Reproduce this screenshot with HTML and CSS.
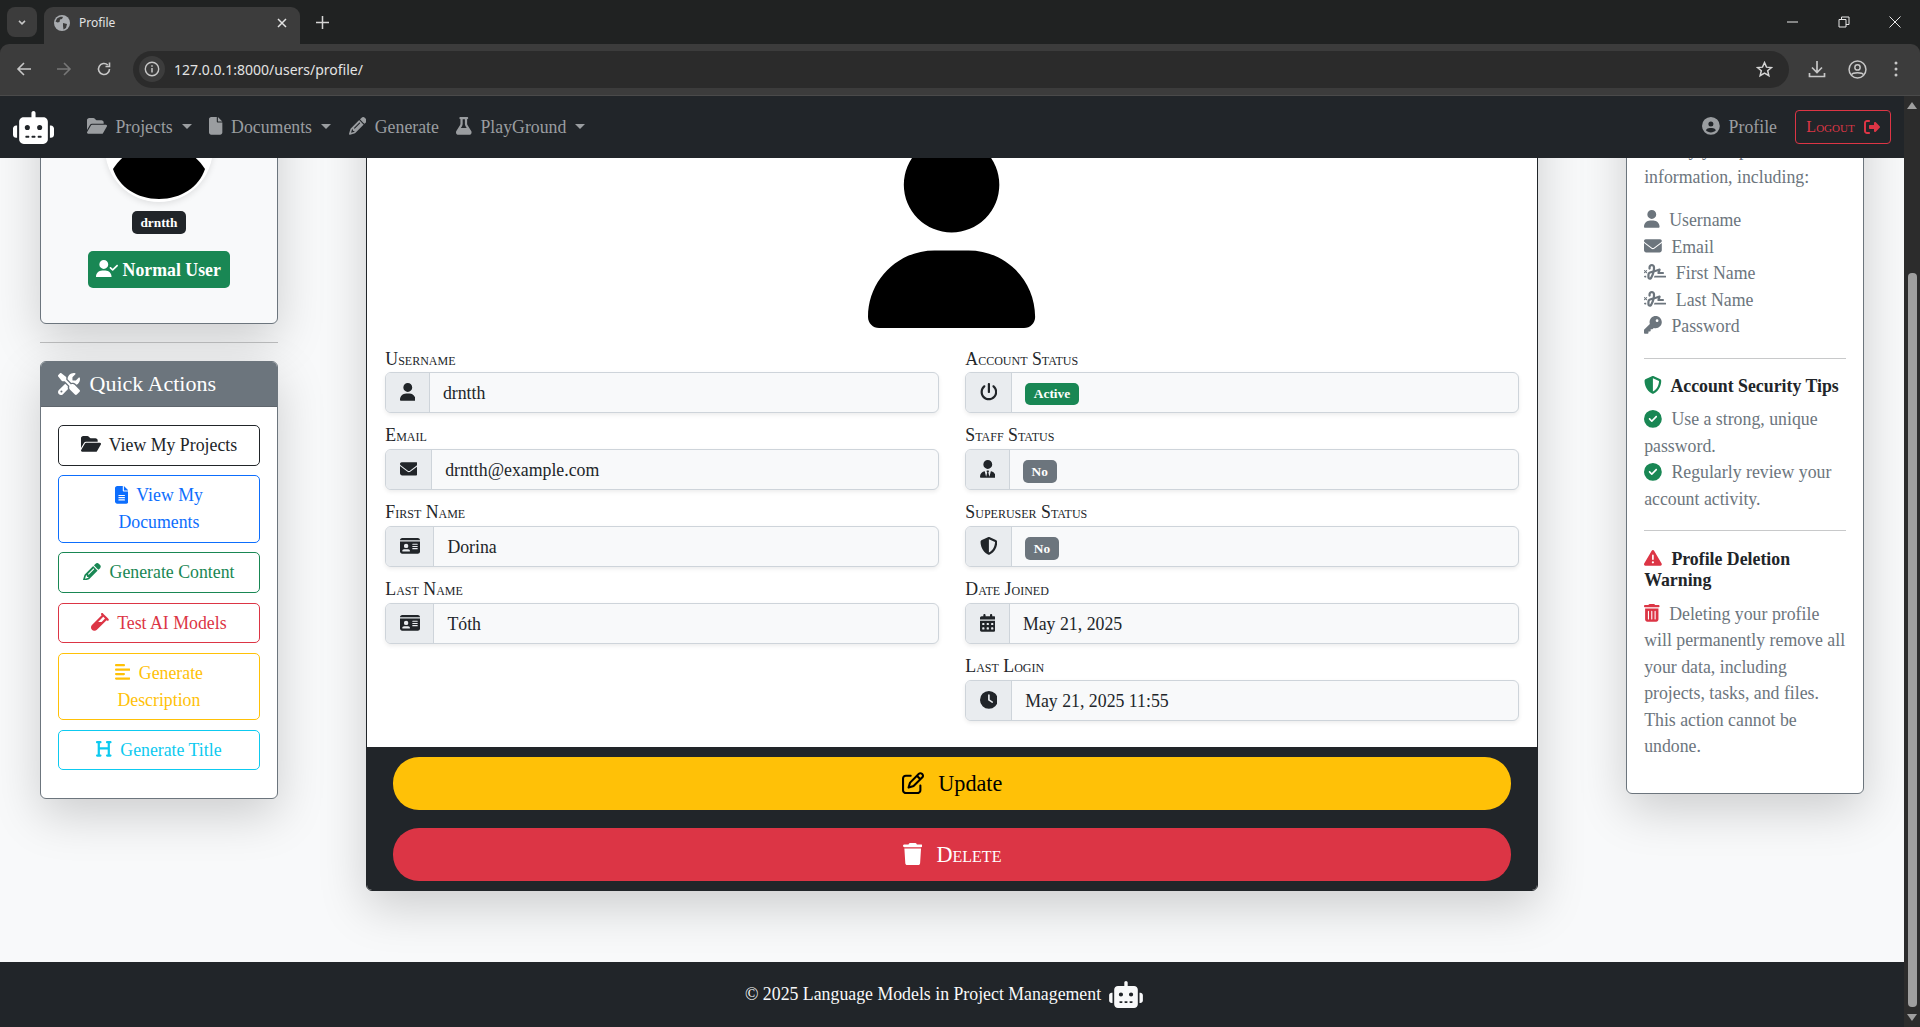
FILE: index.html
```html
<!DOCTYPE html>
<html lang="en">
<head>
    <meta charset="UTF-8">
    <meta name="viewport" content="width=device-width, initial-scale=1.0">
    <title>Profile</title>
    <link rel="stylesheet" href="styles.css">
</head>
<body>
    <svg class="sprite" aria-hidden="true">
        <defs>
            <path id="i-user" d="M224 256A128 128 0 1 0 224 0a128 128 0 1 0 0 256zm-45.7 48C79.8 304 0 383.8 0 482.3C0 498.7 13.3 512 29.7 512H418.3c16.4 0 29.7-13.3 29.7-29.7C448 383.8 368.2 304 269.7 304H178.3z"/>
            <path id="i-envelope" d="M48 64C21.5 64 0 85.5 0 112c0 15.1 7.1 29.3 19.2 38.4L236.8 313.6c11.4 8.5 27 8.5 38.4 0L492.8 150.4c12.1-9.1 19.2-23.3 19.2-38.4c0-26.5-21.5-48-48-48H48zM0 176V384c0 35.3 28.7 64 64 64H448c35.3 0 64-28.7 64-64V176L294.4 339.2c-22.8 17.1-54 17.1-76.8 0L0 176z"/>
            <path id="i-folder" d="M88.7 223.8L0 375.8V96C0 60.7 28.7 32 64 32H181.5c17 0 33.3 6.7 45.3 18.7l26.5 26.5c12 12 28.3 18.7 45.3 18.7H416c35.3 0 64 28.7 64 64v32H144c-22.8 0-43.8 12.1-55.3 31.8zm27.6 16.1C122.1 230 132.6 224 144 224H544c11.5 0 22 6.1 27.7 16.1s5.7 22.2-.1 32.1l-112 192C453.9 474 443.4 480 432 480H32c-11.5 0-22-6.1-27.7-16.1s-5.7-22.2 .1-32.1l112-192z"/>
            <path id="i-file" d="M0 64C0 28.7 28.7 0 64 0H224V128c0 17.7 14.3 32 32 32H384V448c0 35.3-28.7 64-64 64H64c-35.3 0-64-28.7-64-64V64zm384 64H256V0L384 128z"/>
            <path id="i-file-lines" d="M64 0C28.7 0 0 28.7 0 64V448c0 35.3 28.7 64 64 64H320c35.3 0 64-28.7 64-64V160H256c-17.7 0-32-14.3-32-32V0H64zM256 0V128H384L256 0zM112 256H272c8.8 0 16 7.2 16 16s-7.2 16-16 16H112c-8.8 0-16-7.2-16-16s7.2-16 16-16zm0 64H272c8.8 0 16 7.2 16 16s-7.2 16-16 16H112c-8.8 0-16-7.2-16-16s7.2-16 16-16zm0 64H272c8.8 0 16 7.2 16 16s-7.2 16-16 16H112c-8.8 0-16-7.2-16-16s7.2-16 16-16z"/>
            <path id="i-pencil" d="M410.3 231l11.3-11.3-33.9-33.9-62.1-62.1L291.7 89.8l-11.3 11.3-22.6 22.6L58.6 322.9c-10.4 10.4-18 23.3-22.2 37.4L1 480.7c-2.5 8.4-.2 17.5 6.1 23.7s15.3 8.5 23.7 6.1l120.3-35.4c14.1-4.2 27-11.8 37.4-22.2L387.7 253.7 410.3 231zM160 399.4l-9.1 22.7c-4 3.1-8.5 5.4-13.3 6.9L59.4 452l23-78.1c1.4-4.9 3.8-9.4 6.9-13.3l22.7-9.1v32c0 8.8 7.2 16 16 16h32zM362.7 18.7L348.3 33.2 325.7 55.8 314.3 67.1l33.9 33.9 62.1 62.1 33.9 33.9 11.3-11.3 22.6-22.6 14.5-14.5c25-25 25-65.5 0-90.5L453.3 18.7c-25-25-65.5-25-90.5 0zm-47.4 168l-144 144c-6.2 6.2-16.4 6.2-22.6 0s-6.2-16.4 0-22.6l144-144c6.2-6.2 16.4-6.2 22.6 0s6.2 16.4 0 22.6z"/>
            <path id="i-flask" d="M288 0H160 128C110.3 0 96 14.3 96 32s14.3 32 32 32V196.8c0 11.8-3.3 23.5-9.5 33.5L10.3 406.2C3.6 417.2 0 429.7 0 442.6C0 480.9 31.1 512 69.4 512H378.6c38.3 0 69.4-31.1 69.4-69.4c0-12.8-3.6-25.4-10.3-36.4L329.5 230.4c-6.2-10.1-9.5-21.7-9.5-33.5V64c17.7 0 32-14.3 32-32s-14.3-32-32-32H288zM192 196.8V64h64V196.8c0 23.7 6.6 46.9 19 67.1L309.5 320h-171L173 263.9c12.4-20.2 19-43.4 19-67.1z"/>
            <path id="i-circle-user" d="M399 384.2C376.9 345.8 335.4 320 288 320H224c-47.4 0-88.9 25.8-111 64.2c35.2 39.2 86.2 63.8 143 63.8s107.8-24.7 143-63.8zM0 256a256 256 0 1 1 512 0A256 256 0 1 1 0 256zm256 16a72 72 0 1 0 0-144 72 72 0 1 0 0 144z"/>
            <path id="i-logout" d="M377.9 105.9L500.7 228.7c7.2 7.2 11.3 17.1 11.3 27.3s-4.1 20.1-11.3 27.3L377.9 406.1c-6.4 6.4-15 9.9-24 9.9c-18.7 0-33.9-15.2-33.9-33.9l0-62.1-128 0c-17.7 0-32-14.3-32-32l0-64c0-17.7 14.3-32 32-32l128 0 0-62.1c0-18.7 15.2-33.9 33.9-33.9c9 0 17.6 3.6 24 9.9zM160 96L96 96c-17.7 0-32 14.3-32 32l0 256c0 17.7 14.3 32 32 32l64 0c17.7 0 32 14.3 32 32s-14.3 32-32 32l-64 0c-53 0-96-43-96-96L0 128C0 75 43 32 96 32l64 0c17.7 0 32 14.3 32 32s-14.3 32-32 32z"/>
            <path id="i-user-check" d="M96 128a128 128 0 1 1 256 0A128 128 0 1 1 96 128zM0 482.3C0 383.8 79.8 304 178.3 304h91.4C368.2 304 448 383.8 448 482.3c0 16.4-13.3 29.7-29.7 29.7H29.7C13.3 512 0 498.7 0 482.3zM625 177L497 305c-9.4 9.4-24.6 9.4-33.9 0l-64-64c-9.4-9.4-9.4-24.6 0-33.9s24.6-9.4 33.9 0l47 47L591 143c9.4-9.4 24.6-9.4 33.9 0s9.4 24.6 0 33.9z"/>
            <path id="i-tools" d="M78.6 5C69.1-2.4 55.6-1.5 47 7L7 47c-8.5 8.5-9.4 22-2.1 31.6l80 104c4.5 5.9 11.6 9.4 19 9.4h54.1l109 109c-14.7 29-10 65.4 14.3 89.6l112 112c12.5 12.5 32.8 12.5 45.3 0l64-64c12.5-12.5 12.5-32.8 0-45.3l-112-112c-24.2-24.2-60.6-29-89.6-14.3l-109-109V104c0-7.5-3.5-14.5-9.4-19L78.6 5zM19.9 396.1C7.2 408.8 0 426.1 0 444.1C0 481.6 30.4 512 67.9 512c18 0 35.3-7.2 48-19.9L233.7 374.3c-7.8-20.9-9-43.6-3.6-65.1l-61.7-61.7L19.9 396.1zM512 144c0-10.5-1.1-20.7-3.2-30.5c-2.4-11.2-16.1-14.1-24.2-6l-63.9 63.9c-3 3-7.1 4.7-11.3 4.7H352c-8.8 0-16-7.2-16-16V102.6c0-4.2 1.7-8.3 4.7-11.3l63.9-63.9c8.1-8.1 5.2-21.8-6-24.2C388.7 1.1 378.5 0 368 0C288.5 0 224 64.5 224 144l0 .8 85.3 85.3c36-9.1 75.8 .5 104 28.7L429 274.5c49-23 83-72.8 83-130.5zM56 432a24 24 0 1 1 48 0 24 24 0 1 1 -48 0z"/>
            <path id="i-vial" d="M342.6 9.4c-12.5-12.5-32.8-12.5-45.3 0s-12.5 32.8 0 45.3l9.4 9.4L28.1 342.6C10.1 360.6 0 385 0 410.5V416c0 53 43 96 96 96h5.5c25.5 0 49.9-10.1 67.9-28.1L448 205.3l9.4 9.4c12.5 12.5 32.8 12.5 45.3 0s12.5-32.8 0-45.3l-16-16-128-128-16-16zM205.3 256L352 109.3 402.7 160l-96 96H205.3z"/>
            <path id="i-align-left" d="M288 64c0 17.7-14.3 32-32 32H32C14.3 96 0 81.7 0 64S14.3 32 32 32H256c17.7 0 32 14.3 32 32zm0 256c0 17.7-14.3 32-32 32H32c-17.7 0-32-14.3-32-32s14.3-32 32-32H256c17.7 0 32 14.3 32 32zM0 192c0-17.7 14.3-32 32-32H416c17.7 0 32 14.3 32 32s-14.3 32-32 32H32c-17.7 0-32-14.3-32-32zM448 448c0 17.7-14.3 32-32 32H32c-17.7 0-32-14.3-32-32s14.3-32 32-32H416c17.7 0 32 14.3 32 32z"/>
            <path id="i-heading" d="M0 64C0 46.3 14.3 32 32 32H80h48c17.7 0 32 14.3 32 32s-14.3 32-32 32H112V208H336V96H320c-17.7 0-32-14.3-32-32s14.3-32 32-32h48 48c17.7 0 32 14.3 32 32s-14.3 32-32 32H400V240 416h16c17.7 0 32 14.3 32 32s-14.3 32-32 32H368 320c-17.7 0-32-14.3-32-32s14.3-32 32-32h16V272H112V416h16c17.7 0 32 14.3 32 32s-14.3 32-32 32H80 32c-17.7 0-32-14.3-32-32s14.3-32 32-32H48V240 96H32C14.3 96 0 81.7 0 64z"/>
            <g id="i-signature">
                <path d="M192 128c0-17.7 14.3-32 32-32s32 14.3 32 32v7.8c0 27.7-2.4 55.3-7.1 82.5l-84.4 25.3c-40.6 12.2-68.4 49.6-68.4 92v71.9c0 40 32.5 72.5 72.5 72.5c26 0 50-13.9 62.9-36.5l13.9-24.3c26.8-47 46.5-97.7 58.4-150.5l94.4-28.3-12.5 37.5c-3.3 9.8-1.6 20.5 4.4 28.8s15.7 13.3 26 13.3H544c17.7 0 32-14.3 32-32s-14.3-32-32-32H460.4l18-53.9c3.8-11.3 .9-23.8-7.4-32.4s-20.7-11.8-32.2-8.4L316.4 198.1c2.4-20.2 3.6-40.5 3.6-60.9V128c0-53-43-96-96-96s-96 43-96 96v32c0 17.7 14.3 32 32 32s32-14.3 32-32V128zm-9.2 177l49-14.7c-10.4 33.8-24.5 66.4-42.1 97.2l-13.9 24.3c-1.5 2.6-4.3 4.3-7.4 4.3c-4.7 0-8.5-3.8-8.5-8.5V335.6c0-14.1 9.3-26.6 22.8-30.7zM24 368c-13.3 0-24 10.7-24 24s10.7 24 24 24H64.3c-.2-2.8-.3-5.6-.3-8.5V368H24zm592 48c13.3 0 24-10.7 24-24s-10.7-24-24-24H305.9c-6.7 16.3-14.2 32.3-22.3 48H616z"/>
                <path d="M12 216l64 64M76 216l-64 64" fill="none" stroke="currentColor" stroke-width="30" stroke-linecap="round"/>
            </g>
            <path id="i-key" d="M336 352c97.2 0 176-78.8 176-176S433.2 0 336 0S160 78.8 160 176c0 18.7 2.9 36.8 8.3 53.7L7 391c-4.5 4.5-7 10.6-7 17v80c0 13.3 10.7 24 24 24h80c13.3 0 24-10.7 24-24V448h40c13.3 0 24-10.7 24-24V384h40c6.4 0 12.5-2.5 17-7l33.3-33.3c16.9 5.4 35 8.3 53.7 8.3zM376 96a40 40 0 1 1 0 80 40 40 0 1 1 0-80z"/>
            <path id="i-shield" d="M256 0c4.6 0 9.2 1 13.4 2.9L457.7 82.8c22 9.3 38.4 31 38.3 57.2c-.5 99.2-41.3 280.7-213.6 363.2c-16.7 8-36.1 8-52.8 0C57.3 420.7 16.5 239.2 16 140c-.1-26.2 16.3-47.9 38.3-57.2L242.7 2.9C246.8 1 251.4 0 256 0zm0 66.8V444.8C394 378 431.1 230.1 432 141.4L256 66.8l0 0z"/>
            <path id="i-check" d="M256 512A256 256 0 1 0 256 0a256 256 0 1 0 0 512zM369 209L241 337c-9.4 9.4-24.6 9.4-33.9 0l-64-64c-9.4-9.4-9.4-24.6 0-33.9s24.6-9.4 33.9 0l47 47L335 175c9.4-9.4 24.6-9.4 33.9 0s9.4 24.6 0 33.9z"/>
            <path id="i-warning" d="M256 32c14.2 0 27.3 7.5 34.5 19.8l216 368c7.3 12.4 7.3 27.7 .2 40.1S486.3 480 472 480H40c-14.3 0-27.6-7.7-34.7-20.1s-7-27.8 .2-40.1l216-368C228.7 39.5 241.8 32 256 32zm0 128c-13.3 0-24 10.7-24 24V296c0 13.3 10.7 24 24 24s24-10.7 24-24V184c0-13.3-10.7-24-24-24zm32 224a32 32 0 1 0 -64 0 32 32 0 1 0 64 0z"/>
            <path id="i-trash-can" d="M135.2 17.7C140.6 6.8 151.7 0 163.8 0H284.2c12.1 0 23.2 6.8 28.6 17.7L320 32h96c17.7 0 32 14.3 32 32s-14.3 32-32 32H32C14.3 96 0 81.7 0 64S14.3 32 32 32h96l7.2-14.3zM32 128H416V448c0 35.3-28.7 64-64 64H96c-35.3 0-64-28.7-64-64V128zm96 64c-8.8 0-16 7.2-16 16V432c0 8.8 7.2 16 16 16s16-7.2 16-16V208c0-8.8-7.2-16-16-16zm96 0c-8.8 0-16 7.2-16 16V432c0 8.8 7.2 16 16 16s16-7.2 16-16V208c0-8.8-7.2-16-16-16zm96 0c-8.8 0-16 7.2-16 16V432c0 8.8 7.2 16 16 16s16-7.2 16-16V208c0-8.8-7.2-16-16-16z"/>
            <path id="i-trash" d="M135.2 17.7L128 32H32C14.3 32 0 46.3 0 64S14.3 96 32 96H416c17.7 0 32-14.3 32-32s-14.3-32-32-32H320l-7.2-14.3C307.4 6.8 296.3 0 284.2 0H163.8c-12.1 0-23.2 6.8-28.6 17.7zM416 128H32L53.2 467c1.6 25.3 22.6 45 47.9 45H346.9c25.3 0 46.3-19.7 47.9-45L416 128z"/>
            <path id="i-edit" d="M441 58.9L453.1 71c9.4 9.4 9.4 24.6 0 33.9L424 134.1 377.9 88 407 58.9c9.4-9.4 24.6-9.4 33.9 0zM209.8 256.2L344 121.9 390.1 168 255.8 302.2c-2.9 2.9-6.5 5-10.4 6.1l-58.5 16.7 16.7-58.5c1.1-3.9 3.2-7.5 6.1-10.4zM373.1 25L175.8 222.2c-8.7 8.7-15 19.4-18.3 31.1l-28.6 100c-2.4 8.4-.1 17.4 6.1 23.6s15.2 8.5 23.6 6.1l100-28.6c11.8-3.4 22.5-9.7 31.1-18.3L487 138.9c28.1-28.1 28.1-73.7 0-101.8L474.9 25C446.8-3.1 401.2-3.1 373.1 25zM88 64C39.4 64 0 103.4 0 152V424c0 48.6 39.4 88 88 88H360c48.6 0 88-39.4 88-88V312c0-13.3-10.7-24-24-24s-24 10.7-24 24V424c0 22.1-17.9 40-40 40H88c-22.1 0-40-17.9-40-40V152c0-22.1 17.9-40 40-40H200c13.3 0 24-10.7 24-24s-10.7-24-24-24H88z"/>
            <path id="i-id-card" d="M0 96l576 0c0-35.3-28.7-64-64-64H64C28.7 32 0 60.7 0 96zm0 32V416c0 35.3 28.7 64 64 64H512c35.3 0 64-28.7 64-64V128H0zM64 405.3c0-29.5 23.9-53.3 53.3-53.3H234.7c29.5 0 53.3 23.9 53.3 53.3c0 5.9-4.8 10.7-10.7 10.7H74.7c-5.9 0-10.7-4.8-10.7-10.7zM176 192a64 64 0 1 1 0 128 64 64 0 1 1 0-128zm176 16c0-8.8 7.2-16 16-16H496c8.8 0 16 7.2 16 16s-7.2 16-16 16H368c-8.8 0-16-7.2-16-16zm0 64c0-8.8 7.2-16 16-16H496c8.8 0 16 7.2 16 16s-7.2 16-16 16H368c-8.8 0-16-7.2-16-16zm0 64c0-8.8 7.2-16 16-16H496c8.8 0 16 7.2 16 16s-7.2 16-16 16H368c-8.8 0-16-7.2-16-16z"/>
            <path id="i-power" d="M288 32c0-17.7-14.3-32-32-32s-32 14.3-32 32V256c0 17.7 14.3 32 32 32s32-14.3 32-32V32zM143.5 120.6c13.6-11.3 15.4-31.5 4.1-45.1s-31.5-15.4-45.1-4.1C49.7 115.4 16 181.8 16 256c0 132.5 107.5 240 240 240s240-107.5 240-240c0-74.2-33.8-140.6-86.6-184.6c-13.6-11.3-33.8-9.4-45.1 4.1s-9.4 33.8 4.1 45.1c38.9 32.3 63.5 81 63.5 135.4c0 97.2-78.8 176-176 176s-176-78.8-176-176c0-54.4 24.7-103.1 63.5-135.4z"/>
            <path id="i-user-tie" d="M96 128a128 128 0 1 0 256 0A128 128 0 1 0 96 128zm94.5 200.2l18.6 31L175.8 483.1l-36-146.9c-2-8.1-9.8-13.4-17.9-11.3C51.9 342.4 0 405.8 0 481.3c0 17 13.8 30.7 30.7 30.7H162.5c0 0 0 0 .1 0H168 280h5.5c0 0 0 0 .1 0H417.3c17 0 30.7-13.8 30.7-30.7c0-75.5-51.9-138.9-121.9-156.4c-8.1-2-15.9 3.3-17.9 11.3l-36 146.9L238.9 359.2l18.6-31c6.4-10.7-1.3-24.2-13.7-24.2H224 204.3c-12.4 0-20.1 13.6-13.7 24.2z"/>
            <path id="i-calendar" d="M128 0c17.7 0 32 14.3 32 32V64H288V32c0-17.7 14.3-32 32-32s32 14.3 32 32V64h48c26.5 0 48 21.5 48 48v48H0V112C0 85.5 21.5 64 48 64H96V32c0-17.7 14.3-32 32-32zM0 192H448V464c0 26.5-21.5 48-48 48H48c-26.5 0-48-21.5-48-48V192zm64 80v32c0 8.8 7.2 16 16 16h32c8.8 0 16-7.2 16-16V272c0-8.8-7.2-16-16-16H80c-8.8 0-16 7.2-16 16zm128 0v32c0 8.8 7.2 16 16 16h32c8.8 0 16-7.2 16-16V272c0-8.8-7.2-16-16-16H208c-8.8 0-16 7.2-16 16zm144-16c-8.8 0-16 7.2-16 16v32c0 8.8 7.2 16 16 16h32c8.8 0 16-7.2 16-16V272c0-8.8-7.2-16-16-16H336zM64 400v32c0 8.8 7.2 16 16 16h32c8.8 0 16-7.2 16-16V400c0-8.8-7.2-16-16-16H80c-8.8 0-16 7.2-16 16zm144-16c-8.8 0-16 7.2-16 16v32c0 8.8 7.2 16 16 16h32c8.8 0 16-7.2 16-16V400c0-8.8-7.2-16-16-16H208zm112 16v32c0 8.8 7.2 16 16 16h32c8.8 0 16-7.2 16-16V400c0-8.8-7.2-16-16-16H336c-8.8 0-16 7.2-16 16z"/>
            <path id="i-clock" d="M256 0a256 256 0 1 1 0 512A256 256 0 1 1 256 0zM232 120V256c0 8 4 15.5 10.7 20l96 64c11 7.4 25.9 4.4 33.3-6.7s4.4-25.9-6.7-33.3L280 243.2V120c0-13.3-10.7-24-24-24s-24 10.7-24 24z"/>
            <path id="i-robot" d="M320 0c17.7 0 32 14.3 32 32V96H472c39.8 0 72 32.2 72 72V440c0 39.8-32.2 72-72 72H168c-39.8 0-72-32.2-72-72V168c0-39.8 32.2-72 72-72H288V32c0-17.7 14.3-32 32-32zM208 384c-8.8 0-16 7.2-16 16s7.2 16 16 16h32c8.8 0 16-7.2 16-16s-7.2-16-16-16H208zm96 0c-8.8 0-16 7.2-16 16s7.2 16 16 16h32c8.8 0 16-7.2 16-16s-7.2-16-16-16H304zm96 0c-8.8 0-16 7.2-16 16s7.2 16 16 16h32c8.8 0 16-7.2 16-16s-7.2-16-16-16H400zM264 256a40 40 0 1 0 -80 0 40 40 0 1 0 80 0zm152 40a40 40 0 1 0 0-80 40 40 0 1 0 0 80zM48 224H64V416H48c-26.5 0-48-21.5-48-48V272c0-26.5 21.5-48 48-48zm544 0c26.5 0 48 21.5 48 48v96c0 26.5-21.5 48-48 48H576V224h16z"/>
        </defs>
    </svg>

    <div class="browser">
        <div class="tabstrip">
            <div class="tab-search">
                <svg class="cicon" viewBox="0 0 16 16"><path d="M4 6.5l4 4 4-4" fill="none" stroke="currentColor" stroke-width="2"/></svg>
            </div>
            <div class="tab">
                <svg class="favicon" viewBox="0 0 16 16"><circle cx="8" cy="8" r="8" fill="#a9acb0"/><path d="M3 3.500c2-1.500 4-2 6-1.500L8 4 6 4.500 5.500 7 3.500 7.500 1.500 6.500zM9 8l4 1-1 4-2.500 1.500L9 11z" fill="#3c3c3c"/></svg>
                <span class="tab-title">Profile</span>
                <svg class="tab-close" viewBox="0 0 10 10"><path d="M1 1l8 8M9 1l-8 8" fill="none" stroke="currentColor" stroke-width="1.500"/></svg>
            </div>
            <svg class="new-tab" viewBox="0 0 12 12"><path d="M6 0v12M0 6h12" fill="none" stroke="currentColor" stroke-width="1.400"/></svg>
            <div class="window-controls">
                <svg viewBox="0 0 12 12"><path d="M0 6h11" fill="none" stroke="currentColor"/></svg>
                <svg viewBox="0 0 12 12"><path d="M1 3.500h7v7.500H1zM3.500 3.500V1H11v7.500H8" fill="none" stroke="currentColor"/></svg>
                <svg viewBox="0 0 12 12"><path d="M.5.500l11 11M11.500.500l-11 11" fill="none" stroke="currentColor"/></svg>
            </div>
        </div>
        <div class="toolbar">
            <svg class="tool" viewBox="0 0 16 16"><path d="M15 8H2M8 2L2 8l6 6" fill="none" stroke="currentColor" stroke-width="1.600"/></svg>
            <svg class="tool tool-off" viewBox="0 0 16 16"><path d="M1 8h13M8 2l6 6-6 6" fill="none" stroke="currentColor" stroke-width="1.600"/></svg>
            <svg class="tool" viewBox="0 0 16 16"><path d="M13.500 8A5.500 5.500 0 1 1 11.800 4M13.500 1.500V5.500H9.500" fill="none" stroke="currentColor" stroke-width="1.600"/></svg>
            <div class="urlbar">
                <span class="url-chip">
                    <svg viewBox="0 0 16 16"><circle cx="8" cy="8" r="6.700" fill="none" stroke="currentColor" stroke-width="1.400"/><path d="M8 7v4.500M8 4.300v1.500" stroke="currentColor" stroke-width="1.500"/></svg>
                </span>
                <span class="url-text">127.0.0.1:8000/users/profile/</span>
                <svg class="star" viewBox="0 0 16 16"><path d="M8 1.500l1.900 4.300 4.600.4-3.500 3 1.100 4.600L8 11.400l-4.100 2.400L5 9.200l-3.500-3 4.600-.4z" fill="none" stroke="currentColor" stroke-width="1.400"/></svg>
            </div>
            <svg class="tool tool-dl" viewBox="0 0 18 18"><path d="M9 1v11M4 7.500L9 12.500l5-5M1.500 13v3.500h15V13" fill="none" stroke="currentColor" stroke-width="1.700"/></svg>
            <svg class="tool tool-me" viewBox="0 0 18 18"><circle cx="9" cy="9" r="8" fill="none" stroke="currentColor" stroke-width="1.400"/><circle cx="9" cy="7" r="2.500" fill="none" stroke="currentColor" stroke-width="1.400"/><path d="M3.500 14c1-2.500 10-2.500 11 0" fill="none" stroke="currentColor" stroke-width="1.400"/></svg>
            <svg class="tool tool-menu" viewBox="0 0 4 16"><circle cx="2" cy="2" r="1.500" fill="currentColor"/><circle cx="2" cy="8" r="1.500" fill="currentColor"/><circle cx="2" cy="14" r="1.500" fill="currentColor"/></svg>
        </div>
    </div>

    <div class="viewport">
        <div class="page">
            <nav class="navbar">
                <svg class="logo" viewBox="0 0 640 512"><use href="#i-robot"/></svg>
                <ul class="nav-links">
                    <li><svg class="icon" viewBox="0 0 576 512"><use href="#i-folder"/></svg> Projects<span class="caret"></span></li>
                    <li><svg class="icon" viewBox="0 0 384 512"><use href="#i-file"/></svg> Documents<span class="caret"></span></li>
                    <li><svg class="icon" viewBox="0 0 512 512"><use href="#i-pencil"/></svg> Generate</li>
                    <li><svg class="icon" viewBox="0 0 448 512"><use href="#i-flask"/></svg> PlayGround<span class="caret"></span></li>
                </ul>
                <div class="nav-right">
                    <span class="nav-profile"><svg class="icon" viewBox="0 0 512 512"><use href="#i-circle-user"/></svg> Profile</span>
                    <a class="btn-logout">Logout <svg class="icon" viewBox="0 0 512 512"><use href="#i-logout"/></svg></a>
                </div>
            </nav>

            <div class="scroller">
                <main class="profile-row">
                    <aside class="side-left">
                        <section class="card user-card">
                            <svg class="avatar" viewBox="0 0 108 108">
                                <circle cx="54" cy="54" r="54" fill="#fff"/>
                                <path d="M54 50c-18 0-35 8-46 25c6 18 24 30 46 30s40-12 46-30c-11-17-28-25-46-25z"/>
                            </svg>
                            <span class="badge badge-dark">drntth</span>
                            <span class="badge badge-role"><svg class="icon" viewBox="0 0 640 512"><use href="#i-user-check"/></svg> Normal User</span>
                        </section>
                        <hr class="side-rule">
                        <section class="card actions-card">
                            <h3 class="card-header"><svg class="icon" viewBox="0 0 512 512"><use href="#i-tools"/></svg> Quick Actions</h3>
                            <div class="actions-body">
                                <a class="btn btn-dark"><svg class="icon" viewBox="0 0 576 512"><use href="#i-folder"/></svg> View My Projects</a>
                                <a class="btn btn-blue"><svg class="icon" viewBox="0 0 384 512"><use href="#i-file-lines"/></svg> View My Documents</a>
                                <a class="btn btn-green"><svg class="icon" viewBox="0 0 512 512"><use href="#i-pencil"/></svg> Generate Content</a>
                                <a class="btn btn-red"><svg class="icon" viewBox="0 0 512 512"><use href="#i-vial"/></svg> Test AI Models</a>
                                <a class="btn btn-yellow"><svg class="icon" viewBox="0 0 448 512"><use href="#i-align-left"/></svg> Generate Description</a>
                                <a class="btn btn-cyan"><svg class="icon" viewBox="0 0 448 512"><use href="#i-heading"/></svg> Generate Title</a>
                            </div>
                        </section>
                    </aside>

                    <section class="profile-card">
                        <div class="profile-body">
                            <svg class="profile-photo" viewBox="0 0 448 512"><use href="#i-user"/></svg>
                            <div class="field-grid">
                                <div class="field-col">
                                    <div class="field">
                                        <label>Username</label>
                                        <div class="input-group">
                                            <span class="addon"><svg class="icon" viewBox="0 0 448 512"><use href="#i-user"/></svg></span>
                                            <span class="value">drntth</span>
                                        </div>
                                    </div>
                                    <div class="field">
                                        <label>Email</label>
                                        <div class="input-group">
                                            <span class="addon"><svg class="icon" viewBox="0 0 512 512"><use href="#i-envelope"/></svg></span>
                                            <span class="value">drntth@example.com</span>
                                        </div>
                                    </div>
                                    <div class="field">
                                        <label>First Name</label>
                                        <div class="input-group">
                                            <span class="addon"><svg class="icon" viewBox="0 0 576 512"><use href="#i-id-card"/></svg></span>
                                            <span class="value">Dorina</span>
                                        </div>
                                    </div>
                                    <div class="field">
                                        <label>Last Name</label>
                                        <div class="input-group">
                                            <span class="addon"><svg class="icon" viewBox="0 0 576 512"><use href="#i-id-card"/></svg></span>
                                            <span class="value">Tóth</span>
                                        </div>
                                    </div>
                                </div>
                                <div class="field-col">
                                    <div class="field">
                                        <label>Account Status</label>
                                        <div class="input-group">
                                            <span class="addon"><svg class="icon" viewBox="0 0 512 512"><use href="#i-power"/></svg></span>
                                            <span class="value"><span class="badge badge-green">Active</span></span>
                                        </div>
                                    </div>
                                    <div class="field">
                                        <label>Staff Status</label>
                                        <div class="input-group">
                                            <span class="addon"><svg class="icon" viewBox="0 0 448 512"><use href="#i-user-tie"/></svg></span>
                                            <span class="value"><span class="badge badge-grey">No</span></span>
                                        </div>
                                    </div>
                                    <div class="field">
                                        <label>Superuser Status</label>
                                        <div class="input-group">
                                            <span class="addon"><svg class="icon" viewBox="0 0 512 512"><use href="#i-shield"/></svg></span>
                                            <span class="value"><span class="badge badge-grey">No</span></span>
                                        </div>
                                    </div>
                                    <div class="field">
                                        <label>Date Joined</label>
                                        <div class="input-group">
                                            <span class="addon"><svg class="icon" viewBox="0 0 448 512"><use href="#i-calendar"/></svg></span>
                                            <span class="value">May 21, 2025</span>
                                        </div>
                                    </div>
                                    <div class="field">
                                        <label>Last Login</label>
                                        <div class="input-group">
                                            <span class="addon"><svg class="icon" viewBox="0 0 512 512"><use href="#i-clock"/></svg></span>
                                            <span class="value">May 21, 2025 11:55</span>
                                        </div>
                                    </div>
                                </div>
                            </div>
                        </div>
                        <div class="profile-footer">
                            <a class="pill pill-update"><svg class="icon" viewBox="0 0 512 512"><use href="#i-edit"/></svg> Update</a>
                            <a class="pill pill-delete"><svg class="icon" viewBox="0 0 448 512"><use href="#i-trash"/></svg> Delete</a>
                        </div>
                    </section>

                    <aside class="side-right">
                        <section class="card info-card">
                            <p class="info-intro">Modify your personal information, including:</p>
                            <ul class="info-list">
                                <li><svg class="icon" viewBox="0 0 448 512"><use href="#i-user"/></svg> Username</li>
                                <li><svg class="icon" viewBox="0 0 512 512"><use href="#i-envelope"/></svg> Email</li>
                                <li><svg class="icon" viewBox="0 0 640 512"><use href="#i-signature"/></svg> First Name</li>
                                <li><svg class="icon" viewBox="0 0 640 512"><use href="#i-signature"/></svg> Last Name</li>
                                <li><svg class="icon" viewBox="0 0 512 512"><use href="#i-key"/></svg> Password</li>
                            </ul>
                            <hr class="info-rule">
                            <h4 class="info-title"><svg class="icon text-green" viewBox="0 0 512 512"><use href="#i-shield"/></svg> Account Security Tips</h4>
                            <ul class="info-list">
                                <li><svg class="icon text-green" viewBox="0 0 512 512"><use href="#i-check"/></svg> Use a strong, unique password.</li>
                                <li><svg class="icon text-green" viewBox="0 0 512 512"><use href="#i-check"/></svg> Regularly review your account activity.</li>
                            </ul>
                            <hr class="info-rule">
                            <h4 class="info-title"><svg class="icon text-red" viewBox="0 0 512 512"><use href="#i-warning"/></svg> Profile Deletion Warning</h4>
                            <p class="info-warning"><svg class="icon text-red" viewBox="0 0 448 512"><use href="#i-trash-can"/></svg> Deleting your profile will permanently remove all your data, including projects, tasks, and files. This action cannot be undone.</p>
                        </section>
                    </aside>
                </main>

                <footer class="site-footer">
                    <span>© 2025 Language Models in Project Management</span>
                    <svg class="footer-logo" viewBox="0 0 640 512"><use href="#i-robot"/></svg>
                </footer>
            </div>
        </div>

        <div class="scrollbar">
            <span class="scroll-up"></span>
            <div class="scroll-track"><div class="scroll-thumb"></div></div>
            <span class="scroll-down"></span>
        </div>
    </div>
</body>
</html>
```

FILE: styles.css
```css
* {
    box-sizing: border-box;
}
html, body {
    height: 100%;
}
body {
    margin: 0;
    display: flex;
    flex-direction: column;
    overflow: hidden;
    background-color: #f8f9fa;
    color: #212529;
    font-family: "Liberation Serif", "Times New Roman", serif;
    font-size: 17.8px;
    line-height: 1.5;
}
.sprite {
    position: absolute;
    width: 0;
    height: 0;
}
.icon {
    height: 1em;
    width: auto;
    fill: currentColor;
    vertical-align: -0.125em;
    margin-right: 4px;
}
.text-green { color: #198754; }
.text-red { color: #dc3545; }

/* browser window */
.browser {
    flex: none;
    height: 96px;
    background-color: #202222;
    font-family: "Noto Sans", sans-serif;
    color: #c7c7c7;
}
.tabstrip {
    height: 44px;
    display: flex;
    align-items: flex-start;
    padding: 7px 0 0 7px;
}
.tab-search {
    width: 30px;
    height: 30px;
    border-radius: 8px;
    background-color: #3c3c3c;
    display: flex;
    align-items: center;
    justify-content: center;
}
.cicon {
    width: 12px;
    height: 12px;
}
.tab {
    width: 256px;
    height: 37px;
    margin-left: 7px;
    padding: 0 13px 6px 10px;
    display: flex;
    align-items: center;
    background-color: #3c3c3c;
    border-radius: 9px 9px 0 0;
}
.favicon {
    width: 16px;
    height: 16px;
}
.tab-title {
    margin-left: 9px;
    flex: 1;
    font-size: 12px;
    color: #e3e3e3;
}
.tab-close {
    width: 10px;
    height: 10px;
    color: #e3e3e3;
}
.new-tab {
    width: 13px;
    height: 13px;
    margin: 9px 0 0 16px;
    color: #d5d5d5;
}
.window-controls {
    margin-left: auto;
    display: flex;
    gap: 39px;
    padding: 9px 19px 0 0;
    color: #e8e8e8;
}
.window-controls svg {
    width: 12px;
    height: 12px;
}
.toolbar {
    height: 52px;
    display: flex;
    align-items: center;
    padding: 0 22px 1px 16px;
    background-color: #3c3c3c;
    border-bottom: 1px solid #4a4a4a;
    border-radius: 9px 9px 0 0;
}
.tool {
    width: 16px;
    height: 16px;
    flex: none;
    margin-right: 24px;
    color: #c7c7c7;
}
.tool-off {
    color: #777;
}
.urlbar {
    flex: 1;
    height: 37px;
    margin: 0 19px 0 -3px;
    padding: 0 16px 0 6px;
    display: flex;
    align-items: center;
    background-color: #2b2b2b;
    border-radius: 19px;
}
.url-chip {
    width: 26px;
    height: 26px;
    border-radius: 50%;
    background-color: #3c3c3c;
    display: flex;
    align-items: center;
    justify-content: center;
}
.url-chip svg {
    width: 16px;
    height: 16px;
}
.url-text {
    margin-left: 9px;
    font-size: 14px;
    color: #e3e3e3;
}
.star {
    width: 17px;
    height: 17px;
    margin-left: auto;
    color: #d5d5d5;
}
.tool-dl {
    width: 18px;
    height: 18px;
    margin-right: 22px;
}
.tool-me {
    width: 19px;
    height: 19px;
    margin-right: 27px;
}
.tool-menu {
    width: 4px;
    height: 16px;
    margin-right: 0;
}

.viewport {
    flex: 1;
    min-height: 0;
    display: flex;
}
.page {
    flex: 1;
    min-width: 0;
    display: flex;
    flex-direction: column;
}

/* navbar */
.navbar {
    flex: none;
    height: 62px;
    display: flex;
    align-items: center;
    padding: 0 13px;
    background-color: #212529;
    color: #9a9da0;
    position: relative;
    z-index: 5;
}
.logo {
    width: 41px;
    height: 33px;
    fill: #fff;
}
.nav-links {
    list-style: none;
    margin: 0 0 0 33px;
    padding: 0;
    display: flex;
    gap: 17.5px;
}
.caret {
    display: inline-block;
    margin-left: 9px;
    vertical-align: 0.2em;
    border-top: 5.4px solid currentColor;
    border-left: 5.4px solid transparent;
    border-right: 5.4px solid transparent;
}
.nav-right {
    margin-left: auto;
    display: flex;
    align-items: center;
    gap: 18px;
}
.btn-logout {
    height: 34px;
    width: 96px;
    display: flex;
    align-items: center;
    justify-content: center;
    gap: 9px;
    border: 1px solid #dc3545;
    border-radius: 4px;
    color: #dc3545;
    font-size: 16px;
    font-variant: small-caps;
}
.btn-logout .icon {
    margin: 0;
}

/* page content */
.scroller {
    flex: 1;
    min-height: 0;
    overflow: hidden;
}
.profile-row {
    margin-top: -90px;
    padding-bottom: 71px;
    display: grid;
    grid-template-columns: 2fr 8fr 2fr;
    align-items: start;
}
.side-left {
    padding: 0 39.5px 0 40px;
}
.side-right {
    padding: 0 40px 0 39.5px;
}
.card {
    border: 1px solid #6c757d;
    border-radius: 6px;
    box-shadow: 0 16px 48px rgba(0, 0, 0, 0.175);
}
.user-card {
    height: 256px;
    padding-bottom: 35px;
    display: flex;
    flex-direction: column;
    align-items: center;
    justify-content: flex-end;
    background-color: #f8f9fa;
}
.avatar {
    width: 108px;
    height: 108px;
    border-radius: 50%;
    box-shadow: 0 2px 6px rgba(0, 0, 0, 0.1);
    margin-bottom: 9px;
}
.badge {
    display: inline-block;
    font-size: 0.75em;
    font-weight: 700;
    line-height: 1;
    padding: 0.35em 0.65em;
    border-radius: 5px;
    color: #fff;
    white-space: nowrap;
}
.badge-dark {
    background-color: #212529;
}
.badge-role {
    margin-top: 17px;
    font-size: 17.8px;
    padding: 9px 9px 9px 8px;
    background-color: #198754;
}
.badge-role .icon {
    margin: 0;
}
.badge-green {
    background-color: #198754;
    vertical-align: 1px;
}
.badge-grey {
    background-color: #6c757d;
}
.side-rule {
    margin: 18px 0;
    border: 0;
    border-top: 1px solid #b8b9ba;
}
.actions-card {
    background-color: #fff;
    overflow: hidden;
}
.card-header {
    margin: 0;
    height: 45px;
    padding: 0 17px 1px;
    display: flex;
    align-items: center;
    background-color: #6c757d;
    border-bottom: 1px solid #5f666d;
    color: #fff;
    font-size: 22px;
    font-weight: 400;
    white-space: pre;
}
.actions-body {
    padding: 18px 17px 18px;
}
.btn {
    display: block;
    margin-bottom: 9.6px;
    padding: 6px 16px;
    border: 1px solid currentColor;
    border-radius: 5px;
    text-align: center;
}
.btn-dark { color: #212529; }
.btn-blue { color: #0d6efd; }
.btn-green { color: #198754; }
.btn-red { color: #dc3545; }
.btn-yellow { color: #ffc107; }
.btn-cyan { color: #0dcaf0; }

/* main profile card */
.profile-card {
    margin: 0 49px;
    height: 823px;
    display: flex;
    flex-direction: column;
    background-color: #fff;
    border: 1px solid #212529;
    border-radius: 6px;
    box-shadow: 0 16px 48px rgba(0, 0, 0, 0.175);
    overflow: hidden;
}
.profile-body {
    flex: 1;
    padding: 67px 18px 0;
}
.profile-photo {
    display: block;
    height: 191px;
    margin: 1px auto 17.5px;
}
.field-grid {
    display: grid;
    grid-template-columns: 1fr 1fr;
    gap: 26.7px;
}
.field {
    margin-bottom: 9px;
}
.field label {
    display: block;
    font-variant: small-caps;
}
.input-group {
    display: flex;
    align-items: stretch;
    background-color: #f8f9fa;
    border: 1px solid #ced4da;
    border-radius: 6px;
    box-shadow: 0 2px 4px rgba(0, 0, 0, 0.075);
    overflow: hidden;
}
.addon {
    padding: 6.3px 0.75em;
    background-color: #e9ecef;
    border-right: 1px solid #ced4da;
}
.addon .icon {
    margin: 0;
}
.value {
    padding: 7px 0.75em 5.6px;
}
.profile-footer {
    flex: none;
    height: 143px;
    padding: 10px 26px 9px;
    display: flex;
    flex-direction: column;
    gap: 18px;
    background-color: #212529;
}
.pill {
    display: block;
    height: 53px;
    border-radius: 26px / 26px;
    font-size: 22.2px;
    line-height: 53px;
    text-align: center;
}
.pill .icon {
    margin-right: 9px;
}
.pill-update {
    background-color: #ffc107;
    color: #000;
}
.pill-delete {
    background-color: #dc3545;
    color: #fff;
    font-variant: small-caps;
}

/* right info card */
.info-card {
    height: 726px;
    padding: 68px 17px 0;
    background-color: #fff;
    color: #6c757d;
    line-height: 26.5px;
}
.info-intro {
    margin: 0 0 17px;
}
.info-list {
    list-style: none;
    margin: 0;
    padding: 0;
}
.info-rule {
    margin: 18px 0 17.5px;
    border: 0;
    border-top: 1px solid #c8c9ca;
}
.info-title {
    margin: 0 0 9px;
    color: #212529;
    font-size: 17.8px;
    font-weight: 700;
    line-height: 1.2;
}
.info-warning {
    margin: 0;
}
.info-title .icon, .info-list .icon, .info-warning .icon {
    margin-right: 5px;
}

/* footer */
.site-footer {
    height: 65px;
    padding-right: 16px;
    display: flex;
    align-items: center;
    justify-content: center;
    gap: 8px;
    background-color: #212529;
    color: #f8f9fa;
}
.footer-logo {
    width: 34px;
    height: 27px;
    fill: #f8f9fa;
}

/* fake scrollbar */
.scrollbar {
    flex: none;
    width: 16px;
    display: flex;
    flex-direction: column;
    background-color: #2c2c2c;
}
.scroll-up, .scroll-down {
    flex: none;
    align-self: center;
    height: 0;
    border-left: 5.5px solid transparent;
    border-right: 5.5px solid transparent;
}
.scroll-up {
    margin: 6px 0 4px;
    border-bottom: 7px solid #9f9f9f;
}
.scroll-down {
    margin: 4px 0 6px;
    border-top: 7px solid #9f9f9f;
}
.scroll-track {
    flex: 1;
    padding: 160px 3px 3px 4px;
}
.scroll-thumb {
    height: 100%;
    border-radius: 4px;
    background-color: #9f9f9f;
}
```
